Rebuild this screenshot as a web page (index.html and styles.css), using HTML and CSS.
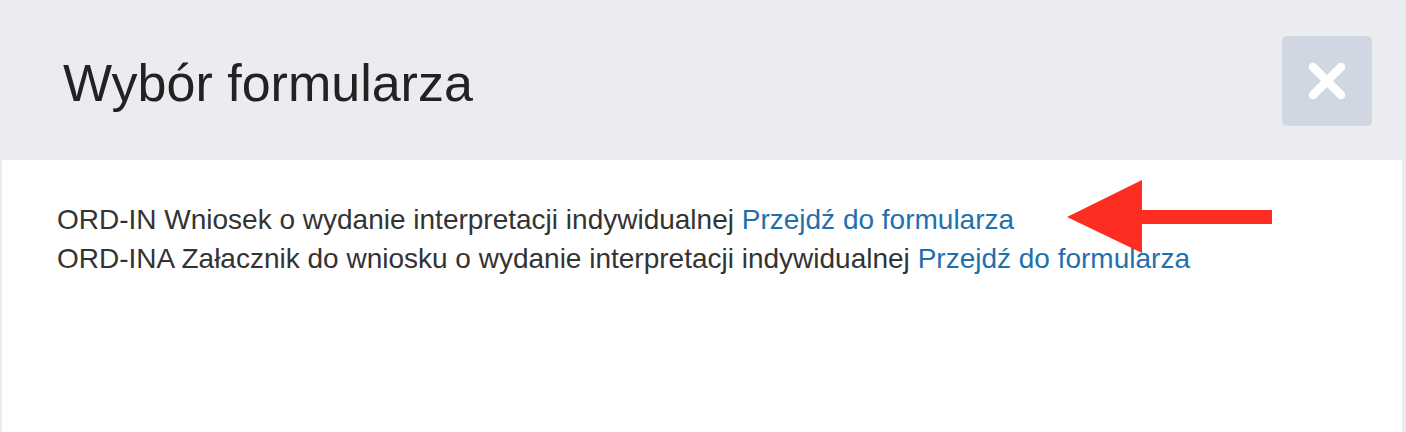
FILE: index.html
```html
<!DOCTYPE html>
<html lang="pl">
<head>
<meta charset="utf-8">
<title>Wybór formularza</title>
<link rel="stylesheet" href="styles.css">
</head>
<body>
<div class="modal">
  <div class="modal-header">
    <h4 class="modal-title">Wybór formularza</h4>
    <button class="close" type="button" aria-label="Zamknij">
      <svg viewBox="0 0 90 90" width="90" height="90" aria-hidden="true">
        <path d="M31 31 L59 59 M59 31 L31 59" stroke="#fff" stroke-width="8.5" stroke-linecap="round" fill="none"/>
      </svg>
    </button>
  </div>
  <div class="modal-body">
    <div class="row-item">ORD-IN Wniosek o wydanie interpretacji indywidualnej <a href="#">Przejdź do formularza</a></div>
    <div class="row-item">ORD-INA Załacznik do wniosku o wydanie interpretacji indywidualnej <a href="#">Przejdź do formularza</a></div>
    <svg class="arrow" viewBox="0 0 210 80" width="210" height="80" aria-hidden="true">
      <polygon points="0,37 75,0 75,30 205,30 205,44 75,44 75,73" fill="#fd2d22"/>
    </svg>
  </div>
</div>
</body>
</html>
```

FILE: styles.css
```css
html, body {
  margin: 0;
  padding: 0;
  background: #ebecf0;
  height: 100%;
}

body {
  font-family: "Liberation Sans", Arial, Helvetica, sans-serif;
  overflow: hidden;
}

.modal {
  display: flex;
  flex-direction: column;
  height: 432px;
}

.modal-header {
  box-sizing: border-box;
  height: 160px;
  display: flex;
  justify-content: space-between;
  align-items: flex-start;
  padding: 36px 34px 0 63px;
}

.modal-title {
  margin: 19px 0 0 0;
  font-size: 52px;
  line-height: 57px;
  font-weight: normal;
  color: #222;
}

.close {
  width: 90px;
  height: 90px;
  padding: 0;
  border: none;
  border-radius: 5px;
  background: #d1d7e2;
  display: flex;
  align-items: center;
  justify-content: center;
  cursor: pointer;
}

.close svg {
  display: block;
}

.modal-body {
  position: relative;
  flex: 1;
  background: #fff;
  margin: 0 4px 0 2px;
  padding: 40px 55px;
  font-size: 28px;
  line-height: 39px;
  color: #333;
}

.modal-body a {
  color: #1f70ab;
  text-decoration: none;
}

.arrow {
  position: absolute;
  left: 1065px;
  top: 20px;
}
```
